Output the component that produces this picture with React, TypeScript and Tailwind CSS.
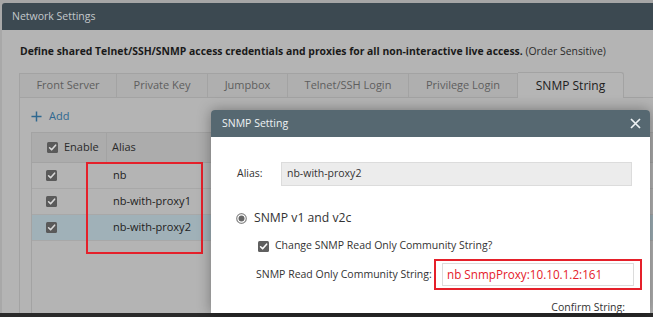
import React from "react";

function Check({ size = 11, bg = "#5a5a5a", check = "#d8d8d8" }: { size?: number; bg?: string; check?: string }) {
  return (
    <svg width={size} height={size} viewBox="0 0 11 11" className="shrink-0">
      <rect x="0" y="0" width="11" height="11" rx="1.5" fill={bg} />
      <path d="M2.6 5.8 L4.6 7.8 L8.6 3.2" stroke={check} strokeWidth="1.6" fill="none" strokeLinecap="round" strokeLinejoin="round" />
    </svg>
  );
}

const tabs = [
  { label: "Front Server", w: 98 },
  { label: "Private Key", w: 91 },
  { label: "Jumpbox", w: 80 },
  { label: "Telnet/SSH Login", w: 121 },
  { label: "Privilege Login", w: 109 },
];

const rows = [
  { alias: "nb", sel: false },
  { alias: "nb-with-proxy1", sel: false },
  { alias: "nb-with-proxy2", sel: true },
];

export default function App() {
  return (
    <div className="relative w-[653px] h-[317px] overflow-hidden bg-[#a4a4a4] font-['Open_Sans',sans-serif]">
      <div className="flex flex-col h-full">
        <div className="h-[3px] bg-[#a6a6a6] shrink-0" />
        <div className="flex flex-1 min-h-0">
          <div className="w-[2px] bg-[#a8a8a8] shrink-0" />
          <div className="flex-1 flex flex-col rounded-tl-[3px] overflow-hidden">
            <div className="h-[27px] shrink-0 bg-[#3c4951] flex items-center pl-[10px] text-[10.5px] text-[#c3c8cb]">
              Network Settings
            </div>
            <div className="flex-1 min-h-0 bg-[#b4b4b4] pl-[17px] flex flex-col">
              <p className="pt-[12px] pl-[1px] text-[10.4px] leading-[18px] text-[#1a1a1a] whitespace-nowrap">
                <span className="font-bold">
                  Define shared Telnet/SSH/SNMP access credentials and proxies for all non-interactive live access.
                </span>{" "}
                <span className="text-[#2a2a2a]">(Order Sensitive)</span>
              </p>
              <div className="mt-[12px] flex items-end h-[26px] shrink-0">
                {tabs.map((t, i) => (
                  <div
                    key={t.label}
                    style={{ width: t.w }}
                    className={`h-[25px] flex items-center justify-center bg-[#afafaf] border-t border-r border-[#a3a3a3] border-b text-[11px] text-[#5e5e5e] ${i === 0 ? "border-l" : ""}`}
                  >
                    {t.label}
                  </div>
                ))}
                <div className="w-[106px] h-[26px] flex items-center justify-center bg-[#b5b5b5] border-t border-r border-[#a3a3a3] rounded-tr-[3px] text-[12px] text-[#202020]">
                  SNMP String
                </div>
                <div className="flex-1 h-[26px] border-b border-[#a3a3a3]" />
              </div>
              <div className="flex-1 min-h-0 border-l border-[#a3a3a3] pl-[11px] flex flex-col">
                <div className="mt-[9px] h-[18px] flex items-center gap-[7px] text-[11px] text-[#2f6890]">
                  <svg width="11" height="11" viewBox="0 0 12 12">
                    <path d="M6 0.5 V11.5 M0.5 6 H11.5" stroke="#2f6890" strokeWidth="1.6" />
                  </svg>
                  <span>Add</span>
                </div>
                <div className="mt-[7px] flex-1 border-l border-t border-[#a3a3a3] flex flex-col">
                  <div className="h-[30px] bg-[#acacac] flex items-center border-b border-[#a3a3a3] text-[11px] text-[#2a2a2a]">
                    <div className="w-[75px] h-full flex items-center pl-[15px] gap-[6px] border-r border-[#a3a3a3]">
                      <Check />
                      <span>Enable</span>
                    </div>
                    <div className="pl-[5px]">Alias</div>
                  </div>
                  {rows.map((r) => (
                    <div
                      key={r.alias}
                      className={`h-[26px] flex items-center border-b border-[#a8a8a8] text-[11px] text-[#222] ${r.sel ? "bg-[#a0b1b8]" : ""}`}
                    >
                      <div className="w-[75px] pl-[14px]">
                        <Check />
                      </div>
                      <div className="pl-[6px]">{r.alias}</div>
                    </div>
                  ))}
                </div>
              </div>
            </div>
          </div>
        </div>
        <div className="h-[4px] bg-[#2a2a2a] shrink-0" />
      </div>

      {/* red annotation box */}
      <div className="absolute left-[86px] top-[162px] w-[117px] h-[92px] border-2 border-[#e5202a]" />

      {/* SNMP Setting modal */}
      <div className="absolute left-[211px] top-[110px] w-[439px] h-[203px] rounded-t-[4px] overflow-hidden flex flex-col shadow-[0_0_14px_rgba(0,0,0,0.35)]">
        <div className="h-[27px] shrink-0 bg-[#566871] flex items-center justify-between pl-[11px] pr-[9px] text-[10.5px] text-[#eef2f4]">
          <span>SNMP Setting</span>
          <svg width="11" height="11" viewBox="0 0 11 11">
            <path d="M1 1 L10 10 M10 1 L1 10" stroke="#eef2f4" strokeWidth="1.7" />
          </svg>
        </div>
        <div className="flex-1 bg-white flex flex-col text-[10.5px] text-[#333]">
          <div className="mt-[25px] flex items-center h-[24px] pl-[26px]">
            <span className="w-[44px]">Alias:</span>
            <div className="w-[351px] h-[24px] bg-[#ececec] border border-[#dcdcdc] flex items-center pl-[5px] text-[#333]">
              nb-with-proxy2
            </div>
          </div>
          <div className="mt-[22px] h-[20px] flex items-center pl-[25px] gap-[7px]">
            <svg width="11" height="11" viewBox="0 0 11 11">
              <circle cx="5.5" cy="5.5" r="4.8" fill="#fff" stroke="#888" strokeWidth="1.2" />
              <circle cx="5.5" cy="5.5" r="3" fill="#666" />
            </svg>
            <span className="text-[12.2px] text-[#333]">SNMP v1 and v2c</span>
          </div>
          <div className="mt-[9px] h-[18px] flex items-center pl-[47px] gap-[6px]">
            <Check bg="#606060" check="#ffffff" />
            <span>Change SNMP Read Only Community String?</span>
          </div>
          <div className="mt-[4px] flex items-center pl-[45px]">
            <span className="w-[178px] whitespace-nowrap">SNMP Read Only Community String:</span>
            <div className="w-[208px] h-[31px] border-2 border-[#e5202a] flex items-center px-[6px]">
              <div className="flex-1 h-[23px] border border-[#dcdcdc] flex items-center pl-[4px] text-[11.7px] text-[#e5202a]">
                nb SnmpProxy:10.10.1.2:161
              </div>
            </div>
          </div>
          <div className="mt-[9px] h-[18px] flex items-center justify-end pr-[25px]">
            <span>Confirm String:</span>
          </div>
        </div>
      </div>
    </div>
  );
}
